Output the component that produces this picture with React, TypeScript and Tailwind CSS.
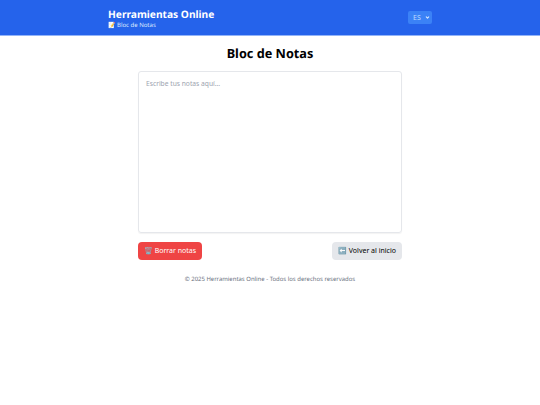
import { ChevronDown } from "lucide-react"

export default function App() {
  return (
    <div className="min-h-[405px] bg-white font-['Noto_Sans',sans-serif] text-black [text-rendering:geometricPrecision] [will-change:opacity]">
      <header className="h-9 border-b border-[#93b4f8] bg-[#2563eb] text-white">
        <div className="mx-auto flex w-[324px] items-center justify-between pt-[7px]">
          <div>
            <h1 className="pt-[1px] text-[10.2px] leading-[13px] font-bold">Herramientas Online</h1>
            <p className="text-[6px] leading-[9px] text-[#dbeafe]">📝 Bloc de Notas</p>
          </div>
          <div className="relative mb-[2px] flex h-[13px] w-[24px] items-center rounded-[2px] bg-[#3b82f6]">
            <select className="h-[13px] w-full appearance-none py-0 pl-[5px] text-[7px] leading-[13px] text-[#bfdbfe]">
              <option>ES</option>
            </select>
            <ChevronDown className="absolute top-[4px] right-[2px] size-[5px] text-[#dbeafe]" strokeWidth={5} />
          </div>
        </div>
      </header>

      <main className="mx-auto w-[264px] pt-[8px]">
        <h2 className="text-center text-[12.7px] leading-[18px] font-bold">Bloc de Notas</h2>
        <textarea
          className="mt-[9px] block h-[162px] w-full resize-none rounded-[3px] border border-[#e5e7eb] px-[7px] py-[6px] text-[6.7px] leading-[11px] shadow-[0_1px_1px_rgba(0,0,0,0.05)] placeholder:text-[#9ca3af]"
          placeholder="Escribe tus notas aquí..."
        />
        <div className="mt-[9px] flex items-center justify-between">
          <button className="h-[18px] w-[64px] rounded-[4px] bg-[#ef4444] text-[7px] text-white">🗑️ Borrar notas</button>
          <button className="h-[18px] w-[70px] rounded-[4px] bg-[#e5e7eb] text-[7px] text-black">⬅️ Volver al inicio</button>
        </div>
        <p className="mt-[15px] text-center text-[5.95px] leading-[9px] text-[#6b7280]">
          © 2025 Herramientas Online - Todos los derechos reservados
        </p>
      </main>
    </div>
  )
}
